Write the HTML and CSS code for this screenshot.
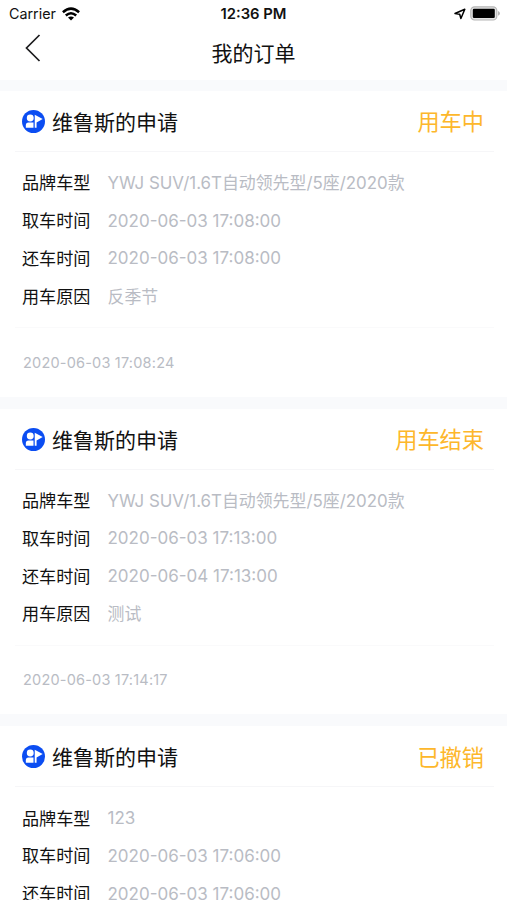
FILE: index.html
```html
<!DOCTYPE html>
<html lang="zh-CN">

<head>
    <meta charset="UTF-8">
    <meta name="viewport" content="width=device-width, initial-scale=1.0">
    <title>我的订单</title>
    <link rel="stylesheet" href="styles.css">
</head>

<body>
    <svg width="0" height="0" class="symbols">
        <symbol id="user-icon" viewBox="0 0 24 24">
            <circle cx="12" cy="12" r="12" fill="#0b4df2" />
            <circle cx="8.6" cy="8.4" r="3.6" fill="#fff" />
            <path d="M4 18.4V15.8Q4 13 6.8 13H12V18.4Z" fill="#fff" />
            <path d="M13.3 5L21.6 9.4L15.2 13V18.4H13.3Z" fill="#fff" />
        </symbol>
    </svg>

    <header>
        <div class="status-bar">
            <div class="carrier">
                <span>Carrier</span>
                <svg width="18" height="14" viewBox="0 0 18 14" fill="none" stroke="#000" stroke-width="2.5">
                    <path d="M0.9 5.2Q9 -2 17.1 5.2" />
                    <path d="M3.8 8.5Q9 3.9 14.2 8.5" />
                    <path d="M9 13.6L6 10.6Q9 8.2 12 10.6Z" fill="#000" stroke="none" />
                </svg>
            </div>
            <span class="clock">12:36 PM</span>
            <div class="battery">
                <svg width="12" height="12" viewBox="0 0 12 12" fill="none" stroke="#000" stroke-width="1.5" stroke-linejoin="round">
                    <path d="M1 5.5L10.8 1.2L6.9 10.5L5.7 6.2Z" />
                </svg>
                <svg width="31" height="15" viewBox="0 0 31 15">
                    <rect x="0.8" y="0.8" width="26" height="13.2" rx="3.8" fill="#e4e4e4" stroke="#b5b5b5" stroke-width="1.2" />
                    <rect x="2.8" y="2.8" width="22" height="9.2" rx="1.2" />
                    <path d="M28 5Q30 6 30 7.4T28 9.8Z" fill="#b5b5b5" />
                </svg>
            </div>
        </div>
        <nav>
            <svg class="back" width="16" height="28" viewBox="0 0 16 28" fill="none" stroke="#1c1c1e" stroke-width="1.7">
                <path d="M14.5 1L1.5 14L14.5 27" />
            </svg>
            <h1>我的订单</h1>
        </nav>
    </header>

    <main>
        <section class="order">
            <div class="order-head">
                <svg class="avatar"><use href="#user-icon" /></svg>
                <h2>维鲁斯的申请</h2>
                <span class="state">用车中</span>
            </div>
            <dl>
                <div><dt>品牌车型</dt><dd class="text">YWJ SUV/1.6T自动领先型/5座/2020款</dd></div>
                <div><dt>取车时间</dt><dd>2020-06-03 17:08:00</dd></div>
                <div><dt>还车时间</dt><dd>2020-06-03 17:08:00</dd></div>
                <div><dt>用车原因</dt><dd class="text">反季节</dd></div>
            </dl>
            <time>2020-06-03 17:08:24</time>
        </section>

        <section class="order">
            <div class="order-head">
                <svg class="avatar"><use href="#user-icon" /></svg>
                <h2>维鲁斯的申请</h2>
                <span class="state">用车结束</span>
            </div>
            <dl>
                <div><dt>品牌车型</dt><dd class="text">YWJ SUV/1.6T自动领先型/5座/2020款</dd></div>
                <div><dt>取车时间</dt><dd>2020-06-03 17:13:00</dd></div>
                <div><dt>还车时间</dt><dd>2020-06-04 17:13:00</dd></div>
                <div><dt>用车原因</dt><dd class="text">测试</dd></div>
            </dl>
            <time>2020-06-03 17:14:17</time>
        </section>

        <section class="order">
            <div class="order-head">
                <svg class="avatar"><use href="#user-icon" /></svg>
                <h2>维鲁斯的申请</h2>
                <span class="state">已撤销</span>
            </div>
            <dl>
                <div><dt>品牌车型</dt><dd>123</dd></div>
                <div><dt>取车时间</dt><dd>2020-06-03 17:06:00</dd></div>
                <div><dt>还车时间</dt><dd>2020-06-03 17:06:00</dd></div>
            </dl>
        </section>
    </main>
</body>

</html>
```
FILE: styles.css
```css
* {
    box-sizing: border-box;
    margin: 0;
    padding: 0;
}

body {
    height: 100vh;
    overflow: hidden;
    background: #f9fafc;
    color: #111;
    font-family: Inter, "Noto Sans CJK SC", sans-serif;
}

.symbols {
    display: block;
}

header {
    height: 80px;
    background: #fff;
}

.status-bar {
    display: grid;
    grid-template-columns: 1fr auto 1fr;
    align-items: center;
    height: 27px;
    padding: 0 6px 0 9px;
    font-size: 14.3px;
}

.carrier,
.battery {
    display: flex;
    align-items: center;
    gap: 6px;
}

.battery {
    justify-content: flex-end;
    gap: 4px;
}

.clock {
    margin-right: 3px;
    font-size: 14.8px;
    font-weight: 600;
}

nav {
    display: grid;
    grid-template-columns: 60px 1fr 60px;
    align-items: center;
    height: 50px;
}

.back {
    margin: -8px 0 0 25px;
}

h1 {
    padding-top: 3px;
    font-size: 21px;
    font-weight: 400;
    line-height: 30px;
    text-align: center;
}

main {
    padding-top: 10.9px;
}

.order {
    height: 305.7px;
    margin-bottom: 12px;
    background: #fff;
}

.order-head {
    display: flex;
    align-items: center;
    height: 61px;
    margin: 0 13px 0 15px;
    padding: 0 10px 0 7px;
    border-bottom: 1px solid #f6f6f8;
}

.avatar {
    width: 23px;
    height: 23px;
    margin-top: 1px;
    margin-right: 7px;
}

h2 {
    font-size: 21px;
    font-weight: 400;
}

.state {
    margin-left: auto;
    padding-bottom: 1px;
    color: #fdb72b;
    font-size: 22.2px;
}

dl {
    margin: 0 13px 0 15px;
    padding: 12px 7px;
    border-bottom: 1px solid #fafafb;
}

dl div {
    display: flex;
    align-items: center;
    height: 37.8px;
    font-size: 17px;
    white-space: nowrap;
}

dt {
    width: 85.5px;
    padding-bottom: 2px;
    font-size: 17.1px;
}

dd {
    color: #b9bcc4;
}

.text {
    padding-bottom: 2px;
    font-size: 16.9px;
}

time {
    display: flex;
    align-items: center;
    height: 68px;
    padding-left: 23px;
    color: #b9bcc4;
    font-size: 14.5px;
    letter-spacing: 0.2px;
}
```
